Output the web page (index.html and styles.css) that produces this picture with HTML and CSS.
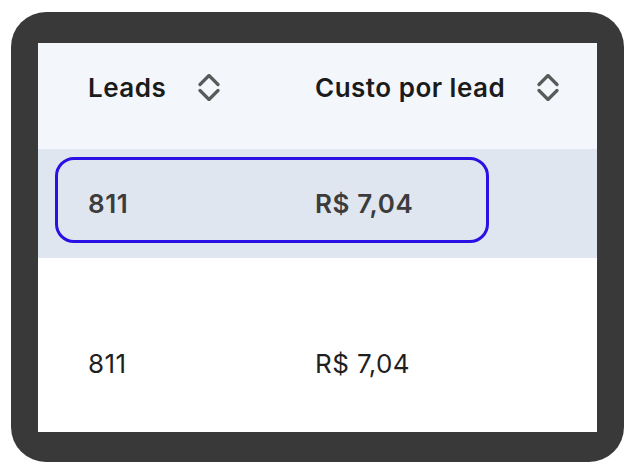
FILE: index.html
```html
<!DOCTYPE html>
<html lang="pt-BR">
<head>
<meta charset="utf-8">
<title>Leads</title>
<link rel="stylesheet" href="styles.css">
</head>
<body>
<div class="frame">
  <div class="table">
    <div class="row head">
      <div class="cell">
        <span>Leads</span>
        <svg class="sort" width="22" height="27" viewBox="0 0 22 27" aria-hidden="true"><path d="M2 10.5 L11 1.5 L20 10.5 M2 16.5 L11 25.5 L20 16.5"/></svg>
      </div>
      <div class="cell">
        <span>Custo por lead</span>
        <svg class="sort" width="22" height="27" viewBox="0 0 22 27" aria-hidden="true"><path d="M2 10.5 L11 1.5 L20 10.5 M2 16.5 L11 25.5 L20 16.5"/></svg>
      </div>
    </div>
    <div class="row selected">
      <div class="cell">811</div>
      <div class="cell">R$ 7,04</div>
      <div class="focus-ring"></div>
    </div>
    <div class="row plain">
      <div class="cell">811</div>
      <div class="cell">R$ 7,04</div>
    </div>
  </div>
</div>
</body>
</html>
```
FILE: styles.css
```css
html, body {
  margin: 0;
  padding: 0;
  background: #ffffff;
}
body {
  font-family: Inter, "Noto Sans", "Liberation Sans", sans-serif;
}
.frame {
  box-sizing: border-box;
  margin: 12px 0 0 11px;
  width: 613px;
  height: 450px;
  padding: 31px 27px 30px 27px;
  background: #393939;
  border-radius: 35px;
}
.table {
  width: 559px;
  height: 389px;
  background: #ffffff;
  overflow: hidden;
}
.row {
  display: grid;
  grid-template-columns: 227px 1fr;
  position: relative;
}
.cell {
  display: flex;
  align-items: center;
  gap: 32px;
  padding-left: 50px;
  white-space: nowrap;
}
.head {
  height: 106px;
  background: #f3f6fa;
  font-size: 26px;
  font-weight: 600;
  letter-spacing: 0.5px;
  color: #1b1b1b;
}
.head .cell {
  padding-bottom: 18px;
}
.sort {
  flex: none;
}
.sort path {
  fill: none;
  stroke: #5a5a5a;
  stroke-width: 3.2;
  stroke-linecap: round;
  stroke-linejoin: round;
}
.selected {
  height: 109px;
  background: #e0e6ef;
  font-size: 26px;
  font-weight: 600;
  letter-spacing: 0.6px;
  color: #3c3c3c;
}
.focus-ring {
  position: absolute;
  left: 17px;
  top: 8px;
  width: 434px;
  height: 86px;
  box-sizing: border-box;
  border: 3px solid #2b10e6;
  border-radius: 19px;
}
.plain {
  height: 210px;
  font-size: 26px;
  font-weight: 400;
  letter-spacing: 0.4px;
  color: #1f1f1f;
}
```
